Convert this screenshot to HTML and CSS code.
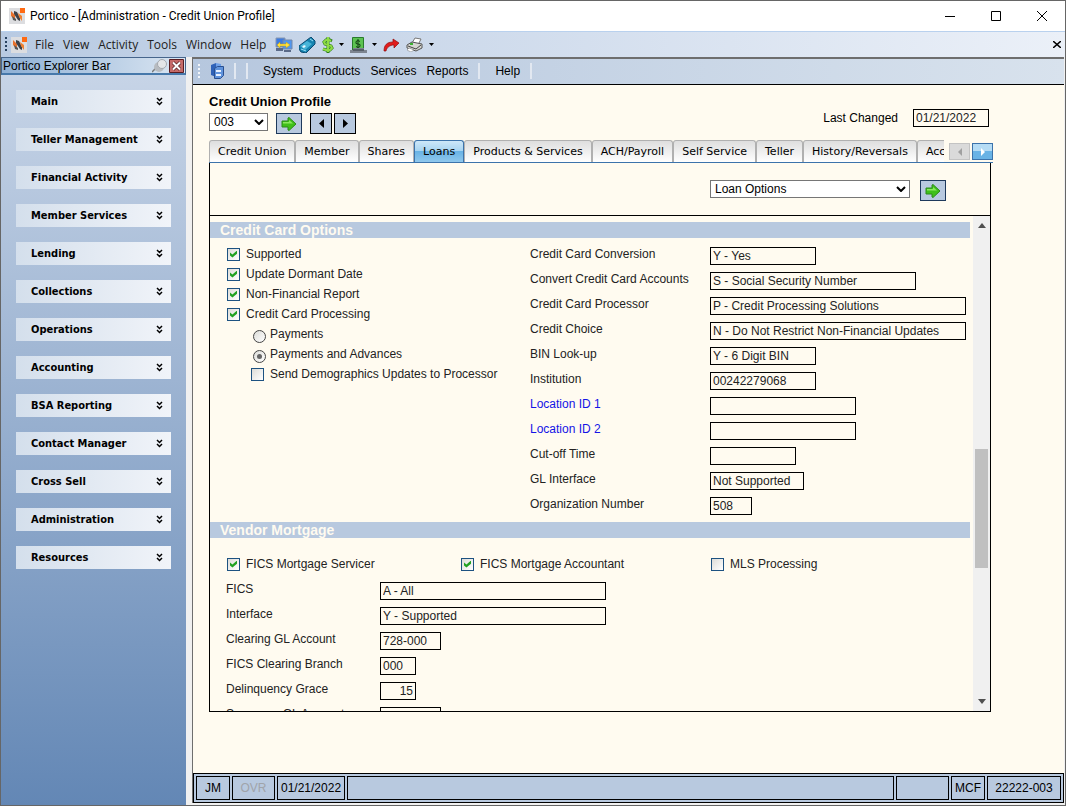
FILE: index.html
```html
<!DOCTYPE html>
<html lang="en">
<head>
    <meta charset="UTF-8">
    <meta name="viewport" content="width=device-width, initial-scale=1.0">
    <title>Portico - Credit Union Profile</title>
    <link rel="stylesheet" href="styles.css">
</head>
<body>
    <svg class="sprite" aria-hidden="true">
        <symbol id="logo" viewBox="0 0 16 16">
            <rect width="16" height="16" fill="#dcdde0"/>
            <path d="M2 3l4 4v5l-4-4z" fill="#e8702a"/>
            <path d="M5 3l3 1 3 6v3l-2-1-4-6z" fill="#3d4148"/>
            <path d="M9 5l4 3v5l-3-4z" fill="#f08030"/>
            <path d="M3 8l4 3v2L4 12z" fill="#555"/>
            <rect x="11" width="5" height="5" fill="#ff6a13"/>
        </symbol>
        <symbol id="go" viewBox="0 0 16 14">
            <path d="M1 4h6V1l1-.5L15 7l-7 6.500-1-.5v-3H1z" fill="#3fc01a" stroke="#2d8a1b"/>
            <path d="M2 5h6V3l4 3.500H2z" fill="#8be860"/>
        </symbol>
        <symbol id="more" viewBox="0 0 7 10">
            <path d="M1 1l2.500 2.500L6 1M1 5l2.500 2.500L6 5" fill="none" stroke="#000" stroke-width="1.500"/>
        </symbol>
        <symbol id="drop" viewBox="0 0 5 3">
            <path d="M0 0h5L2.500 3z" fill="#000"/>
        </symbol>
    </svg>

    <div class="window">
        <header class="title-bar">
            <svg class="logo" width="16" height="16"><use href="#logo"/></svg>
            <h1>Portico - [Administration - Credit Union Profile]</h1>
            <div class="window-buttons">
                <button type="button" aria-label="Minimize"><svg width="10" height="10"><path d="M0 5.500h10" stroke="#000"/></svg></button>
                <button type="button" aria-label="Maximize"><svg width="10" height="10"><path d="M.5.5h9v9h-9z" fill="none" stroke="#000"/></svg></button>
                <button type="button" aria-label="Close"><svg width="10" height="10"><path d="M0 0l10 10M10 0L0 10" stroke="#000"/></svg></button>
            </div>
        </header>

        <nav class="menu-bar">
            <span class="grip"></span>
            <svg class="logo" width="16" height="16"><use href="#logo"/></svg>
            <a href="#">File</a>
            <a href="#">View</a>
            <a href="#">Activity</a>
            <a href="#">Tools</a>
            <a href="#">Window</a>
            <a href="#">Help</a>
            <div class="tools">
                <button type="button" aria-label="Connections">
                    <svg width="18" height="16" viewBox="0 0 18 16">
                        <path d="M1 1h9v9H1z" fill="#3d7be0" stroke="#8898b0"/>
                        <path d="M8 3h9v9H8z" fill="#4f96f0" stroke="#7488a8"/>
                        <path d="M1 11h7v3H1zM9 13h7v2H9z" fill="#5a6a88"/>
                        <path d="M2 8l3-3v2h6V5l4 3-4 3V9H5v2z" fill="#ffe23c" stroke="#c79b10" stroke-width=".5"/>
                    </svg>
                </button>
                <button type="button" aria-label="Tag">
                    <svg width="17" height="16" viewBox="0 0 17 16">
                        <path d="M0 9L8 3l4-3 4 4v3l-9 9-5-1-2-3z" fill="#1683b0" stroke="#0b4a70"/>
                        <path d="M1 9l7-5 5 3-7 6z" fill="#48b5d8"/>
                        <path d="M3 10l2-2 2 1-2 2z" fill="#e5f8ff"/>
                        <path d="M11 2l3 2M2 12l5 2" stroke="#9be0f5"/>
                    </svg>
                </button>
                <button type="button" class="with-drop" aria-label="Cash">
                    <svg width="12" height="16" viewBox="0 0 12 16">
                        <path d="M10 4L8 3H4L2 5l1 2 6 2 1 2-2 2H4l-3-1M6 0v16" fill="none" stroke="#2d7d16" stroke-width="3"/>
                        <path d="M9 4L7 3H4L2 5l1 2 6 2 1 2-2 2H4l-3-1M6 0v15" fill="none" stroke="#8fdc46" stroke-width="2"/>
                    </svg>
                    <svg class="drop" width="5" height="3"><use href="#drop"/></svg>
                </button>
                <button type="button" class="with-drop" aria-label="Teller cash">
                    <svg width="17" height="16" viewBox="0 0 17 16">
                        <path d="M2.500.5h11v13h-11z" fill="#5cc352" stroke="#287c2c"/>
                        <path d="M10 4.500L8 3.500l-2 1v2l4 1v2l-2 1-2-1M8 2v10" fill="none" stroke="#123f15"/>
                        <path d="M0 13h3v-2h11v2h3v3H0z" fill="#7d8590"/>
                        <path d="M3 13h11" stroke="#303840"/>
                    </svg>
                    <svg class="drop" width="5" height="3"><use href="#drop"/></svg>
                </button>
                <button type="button" aria-label="Forward">
                    <svg width="17" height="14" viewBox="0 0 17 14">
                        <path d="M1 13c0-6 3-9 9-9V1l6 4-5 5V7C7 7 4 9 3 13z" fill="#e21c1c" stroke="#8f0b0b" stroke-width=".7"/>
                    </svg>
                </button>
                <button type="button" class="with-drop" aria-label="Print">
                    <svg width="18" height="15" viewBox="0 0 18 15">
                        <path d="M6 6l3-5 6 1-3 6z" fill="#fff" stroke="#777"/>
                        <path d="M1 8l5-3 10 2v4l-6 3-9-3z" fill="#d5d5d0" stroke="#555"/>
                        <path d="M2 9l8 3 5-4" fill="none" stroke="#444"/>
                        <path d="M3 11l5 2-3 2-4-2z" fill="#fff" stroke="#777" stroke-width=".5"/>
                        <path d="M4 7h3" stroke="#3cb030" stroke-width="2"/>
                    </svg>
                    <svg class="drop" width="5" height="3"><use href="#drop"/></svg>
                </button>
            </div>
            <button type="button" class="close-child" aria-label="Close profile"><svg width="8" height="7"><path d="M0 0l8 7M8 0L0 7" stroke="#000" stroke-width="1.500"/></svg></button>
        </nav>

        <div class="workspace">
            <aside class="explorer">
                <div class="explorer-header">
                    <h2>Portico Explorer Bar</h2>
                    <button type="button" aria-label="Pin">
                        <svg width="15" height="14" viewBox="0 0 15 14">
                            <path d="M0 13l4-4" stroke="#777" stroke-width="1.500"/>
                            <ellipse cx="7" cy="8" rx="5" ry="5" fill="#b7bbc0"/>
                            <circle cx="10" cy="5" r="4.500" fill="#e3e5e8" stroke="#a4a9af"/>
                        </svg>
                    </button>
                    <button type="button" aria-label="Close explorer bar">
                        <svg width="15" height="14" viewBox="0 0 15 14">
                            <path d="M.5.5h14v13H.5z" fill="#c66a68" stroke="#5a1c20"/>
                            <path d="M4 3.500l7 7M11 3.500l-7 7" stroke="#522" stroke-width="3.500"/>
                            <path d="M4 3.500l7 7M11 3.500l-7 7" stroke="#fff" stroke-width="2"/>
                        </svg>
                    </button>
                </div>
                <nav class="explorer-groups">
                    <button type="button">Main <svg width="7" height="10"><use href="#more"/></svg></button>
                    <button type="button">Teller Management <svg width="7" height="10"><use href="#more"/></svg></button>
                    <button type="button">Financial Activity <svg width="7" height="10"><use href="#more"/></svg></button>
                    <button type="button">Member Services <svg width="7" height="10"><use href="#more"/></svg></button>
                    <button type="button">Lending <svg width="7" height="10"><use href="#more"/></svg></button>
                    <button type="button">Collections <svg width="7" height="10"><use href="#more"/></svg></button>
                    <button type="button">Operations <svg width="7" height="10"><use href="#more"/></svg></button>
                    <button type="button">Accounting <svg width="7" height="10"><use href="#more"/></svg></button>
                    <button type="button">BSA Reporting <svg width="7" height="10"><use href="#more"/></svg></button>
                    <button type="button">Contact Manager <svg width="7" height="10"><use href="#more"/></svg></button>
                    <button type="button">Cross Sell <svg width="7" height="10"><use href="#more"/></svg></button>
                    <button type="button">Administration <svg width="7" height="10"><use href="#more"/></svg></button>
                    <button type="button">Resources <svg width="7" height="10"><use href="#more"/></svg></button>
                </nav>
            </aside>

            <main class="document">
                <nav class="toolbar">
                    <span class="grip light"></span>
                    <button type="button" aria-label="Server">
                        <svg width="14" height="16" viewBox="0 0 14 16">
                            <path d="M1 2l5-2v14l-5-2z" fill="#2f62b8"/>
                            <path d="M6 0l5 1v3H6z" fill="#6fa0e8"/>
                            <path d="M4.500 5.500l3-2h6v9l-3 3h-6z" fill="#5f93dc" stroke="#294f90"/>
                            <path d="M6 7h5v2H6zM6 11h5v2H6z" fill="#e8f1ff"/>
                        </svg>
                    </button>
                    <span class="separator"></span>
                    <span class="separator low"></span>
                    <a href="#">System</a>
                    <a href="#">Products</a>
                    <a href="#">Services</a>
                    <a href="#">Reports</a>
                    <span class="separator low"></span>
                    <a href="#">Help</a>
                    <span class="separator"></span>
                </nav>

                <form class="profile">
                    <div class="profile-header">
                        <div>
                            <h2 id="profile-title">Credit Union Profile</h2>
                            <div class="record-picker">
                                <div class="select">
                                    <select aria-labelledby="profile-title"><option>003</option></select>
                                    <svg width="10" height="6"><path d="M1 1l4 4 4-4" fill="none" stroke="#000" stroke-width="2"/></svg>
                                </div>
                                <button type="button" class="go" aria-label="Open"><svg width="16" height="14"><use href="#go"/></svg></button>
                                <div class="pager">
                                    <button type="button" aria-label="Previous"><svg width="5" height="9"><path d="M5 0v9L0 4.500z"/></svg></button>
                                    <button type="button" aria-label="Next"><svg width="5" height="9"><path d="M0 0v9l5-4.500z"/></svg></button>
                                </div>
                            </div>
                        </div>
                        <div class="last-changed">
                            <label for="changed">Last Changed</label>
                            <input id="changed" class="w-date" value="01/21/2022" readonly>
                        </div>
                    </div>

                    <div class="tab-strip">
                        <div class="tabs">
                            <button type="button">Credit Union</button>
                            <button type="button">Member</button>
                            <button type="button">Shares</button>
                            <button type="button" class="active">Loans</button>
                            <button type="button">Products &amp; Services</button>
                            <button type="button">ACH/Payroll</button>
                            <button type="button">Self Service</button>
                            <button type="button">Teller</button>
                            <button type="button">History/Reversals</button>
                            <button type="button">Accounting</button>
                        </div>
                        <div class="tab-scroll">
                            <button type="button" disabled aria-label="Scroll tabs left"><svg width="4" height="8"><path d="M4 0v8L0 4z" fill="#a0a0a0"/></svg></button>
                            <button type="button" aria-label="Scroll tabs right"><svg width="4" height="8"><path d="M0 0v8l4-4z" fill="#fff"/></svg></button>
                        </div>
                    </div>

                    <div class="panel">
                        <div class="panel-filter">
                            <div class="select wide">
                                <select aria-label="Section"><option>Loan Options</option></select>
                                <svg width="10" height="6"><path d="M1 1l4 4 4-4" fill="none" stroke="#000" stroke-width="2"/></svg>
                            </div>
                            <button type="button" class="go" aria-label="Go to section"><svg width="16" height="14"><use href="#go"/></svg></button>
                        </div>
                        <div class="panel-scroll">
                            <div class="panel-content">
                                <section>
                                    <h3>Credit Card Options</h3>
                                    <div class="card-options">
                                        <div class="checks">
                                            <label><input type="checkbox" checked>Supported</label>
                                            <label><input type="checkbox" checked>Update Dormant Date</label>
                                            <label><input type="checkbox" checked>Non-Financial Report</label>
                                            <label><input type="checkbox" checked>Credit Card Processing</label>
                                            <div class="nested">
                                                <label><input type="radio" name="processing">Payments</label>
                                                <label><input type="radio" name="processing" checked>Payments and Advances</label>
                                                <label><input type="checkbox">Send Demographics Updates to Processor</label>
                                            </div>
                                        </div>
                                        <div class="fields card-fields">
                                            <label for="conversion">Credit Card Conversion</label>
                                            <input id="conversion" class="w-code" value="Y - Yes">
                                            <label for="convert">Convert Credit Card Accounts</label>
                                            <input id="convert" class="w-medium" value="S - Social Security Number">
                                            <label for="processor">Credit Card Processor</label>
                                            <input id="processor" class="w-long" value="P - Credit Processing Solutions">
                                            <label for="choice">Credit Choice</label>
                                            <input id="choice" class="w-long" value="N - Do Not Restrict Non-Financial Updates">
                                            <label for="bin">BIN Look-up</label>
                                            <input id="bin" class="w-code" value="Y - 6 Digit BIN">
                                            <label for="institution">Institution</label>
                                            <input id="institution" class="w-code" value="00242279068">
                                            <label for="location1" class="editable">Location ID 1</label>
                                            <input id="location1" class="w-location">
                                            <label for="location2" class="editable">Location ID 2</label>
                                            <input id="location2" class="w-location">
                                            <label for="cutoff">Cut-off Time</label>
                                            <input id="cutoff" class="w-time">
                                            <label for="gl">GL Interface</label>
                                            <input id="gl" class="w-status" value="Not Supported">
                                            <label for="organization">Organization Number</label>
                                            <input id="organization" class="w-number" value="508">
                                        </div>
                                    </div>
                                </section>
                                <section>
                                    <h3>Vendor Mortgage</h3>
                                    <div class="mortgage-checks">
                                        <label><input type="checkbox" checked>FICS Mortgage Servicer</label>
                                        <label><input type="checkbox" checked>FICS Mortgage Accountant</label>
                                        <label><input type="checkbox">MLS Processing</label>
                                    </div>
                                    <div class="fields mortgage-fields">
                                        <label for="fics">FICS</label>
                                        <input id="fics" class="w-vendor" value="A - All">
                                        <label for="interface">Interface</label>
                                        <input id="interface" class="w-vendor" value="Y - Supported">
                                        <label for="clearing">Clearing GL Account</label>
                                        <input id="clearing" class="w-account" value="728-000">
                                        <label for="branch">FICS Clearing Branch</label>
                                        <input id="branch" class="w-small" value="000">
                                        <label for="grace">Delinquency Grace</label>
                                        <input id="grace" class="w-small right" value="15">
                                        <label for="suspense">Suspense GL Account</label>
                                        <input id="suspense" class="w-account">
                                    </div>
                                </section>
                            </div>
                            <div class="scrollbar">
                                <svg width="8" height="5"><path d="M0 5h8L4 0z" fill="#505050"/></svg>
                                <div class="track"><div class="thumb"></div></div>
                                <svg width="8" height="5"><path d="M0 0h8L4 5z" fill="#505050"/></svg>
                            </div>
                        </div>
                    </div>
                </form>

                <footer class="status-bar">
                    <span class="s-user">JM</span>
                    <span class="s-mode">OVR</span>
                    <span class="s-date">01/21/2022</span>
                    <span class="s-message"></span>
                    <span class="s-info"></span>
                    <span class="s-user">MCF</span>
                    <span class="s-branch">22222-003</span>
                </footer>
            </main>
        </div>
    </div>
</body>
</html>
```
FILE: styles.css
```css
* {
    box-sizing: border-box;
}
body {
    margin: 0;
    height: 100vh;
    overflow: hidden;
    background: #f0f0f0;
    font-family: "Liberation Sans", Arial, sans-serif;
    font-size: 12px;
    color: #000;
}
h1, h2, h3 {
    margin: 0;
    font-weight: normal;
}
a {
    color: inherit;
    text-decoration: none;
}
button {
    display: flex;
    align-items: center;
    justify-content: center;
    margin: 0;
    padding: 0;
    border: 0;
    background: none;
    color: inherit;
    font: inherit;
}
svg {
    display: block;
    flex: none;
}
.sprite {
    position: absolute;
    width: 0;
    height: 0;
}
.window {
    display: flex;
    flex-direction: column;
    height: 100vh;
    border: 1px solid #666;
}

/* Title bar and menu */
.title-bar {
    display: flex;
    align-items: center;
    height: 30px;
    padding-left: 8px;
    background: #fff;
}
.title-bar h1 {
    margin-left: 5px;
    font-family: Roboto, "Segoe UI", sans-serif;
    font-size: 12px;
}
.window-buttons {
    display: flex;
    margin-left: auto;
}
.window-buttons button {
    width: 46px;
    height: 28px;
}
.menu-bar {
    display: flex;
    align-items: center;
    gap: 9px;
    height: 26px;
    padding: 0 4px;
    border-top: 1px solid #b9d1ee;
    background: linear-gradient(90deg, #b8cae2, #ebf0f8);
    color: #222;
    font-family: "Open Sans", "Noto Sans", sans-serif;
}
.menu-bar .logo {
    margin: 0 -1px 0 -5px;
}
.grip {
    width: 2px;
    height: 15px;
    background: repeating-linear-gradient(#27415f 0 2px, transparent 2px 4px);
}
.grip.light {
    background: repeating-linear-gradient(#f4f6fa 0 2px, transparent 2px 4px);
}
.tools {
    display: flex;
    align-items: center;
    gap: 6px;
}
.with-drop {
    gap: 5px;
}
.close-child {
    margin-left: auto;
}

.workspace {
    display: flex;
    flex: 1;
    min-height: 0;
}

/* Explorer bar */
.explorer {
    width: 185px;
    flex: none;
    background: linear-gradient(#c9d6e8, #6387b5);
}
.explorer-header {
    display: flex;
    align-items: center;
    gap: 2px;
    height: 18px;
    padding: 0 1px;
    border: 1px solid #46658c;
    border-bottom: 2px solid #4678aa;
    background: linear-gradient(90deg, #8eb0d5, #dbe6f2);
}
.explorer-header h2 {
    margin-right: auto;
    font-size: 12px;
}
.explorer-groups {
    display: flex;
    flex-direction: column;
    gap: 15px;
    padding: 15px;
}
.explorer-groups button {
    justify-content: space-between;
    height: 23px;
    padding: 0 8px 0 15px;
    background: linear-gradient(90deg, #d4dfec, #f1f4f9);
    font-family: "DejaVu Sans Condensed", Tahoma, sans-serif;
    font-size: 11px;
    font-weight: bold;
}

/* Document area */
.document {
    display: flex;
    flex: 1;
    flex-direction: column;
    min-width: 0;
    margin: 0 1px 2px 6px;
    border: solid #6e6e6e;
    border-width: 2px 0 0 1px;
    background: #fffbf0;
}
.toolbar {
    display: flex;
    align-items: center;
    flex: none;
    gap: 10px;
    height: 26px;
    padding: 0 0 1px 5px;
    border-bottom: 1px solid #000;
    background: linear-gradient(90deg, #b6c7de, #d8e2ed);
}
.separator {
    width: 2px;
    height: 16px;
    background: #e2e8f1;
}
.separator.low + a {
    margin-left: 5px;
}
.profile {
    display: flex;
    flex: 1;
    flex-direction: column;
    min-height: 0;
    padding: 8px 71px 61px 16px;
}
.profile-header {
    display: flex;
    justify-content: space-between;
    margin-right: 4px;
}
.profile-header h2 {
    height: 20px;
    font-size: 13px;
    font-weight: bold;
    line-height: 17px;
}
.record-picker {
    display: flex;
    gap: 8px;
}
.select {
    display: flex;
    align-items: center;
    position: relative;
    width: 59px;
    height: 18px;
}
.select.wide {
    width: 200px;
}
.select select {
    width: 100%;
    height: 100%;
    padding: 0 4px;
    border: 1px solid #767676;
    border-radius: 0;
    appearance: none;
    background: #fff;
    color: #000;
    font: inherit;
}
/* chevron lies over the select */
.select svg {
    position: absolute;
    right: 4px;
    pointer-events: none;
}
.go {
    width: 26px;
    height: 21px;
    border: 1px solid #1e395b;
    background: #b8c9df;
}
.pager {
    display: flex;
    gap: 2px;
}
.pager button {
    width: 22px;
    height: 21px;
    border: 1px solid #000;
    background: #b8c9df;
}
input {
    height: 18px;
    margin: 0;
    padding: 0 2px;
    border: 1px solid #000;
    border-radius: 0;
    background: #fffbf0;
    color: #222;
    font: inherit;
}
.last-changed {
    display: flex;
    align-items: center;
    gap: 15px;
    height: 18px;
    margin-top: 16px;
}

/* Tabs */
.tab-strip {
    display: flex;
    flex: none;
    justify-content: space-between;
    margin-top: 6px;
    border-bottom: 1px solid #3c73ab;
    font-family: "DejaVu Sans", Verdana, sans-serif;
    font-size: 11px;
}
.tabs {
    display: flex;
    overflow: hidden;
    margin-right: 5px;
}
.tabs button {
    flex: none;
    height: 22px;
    padding: 0 8px;
    border: 1px solid #b0b0b0;
    border-bottom: 0;
    border-radius: 3px 3px 0 0;
    background: linear-gradient(#dedede, #fff);
}
.tabs .active {
    border-color: #3c73ab;
    background: linear-gradient(#cde7f8 0, #a5d3f1 50%, #69b3e5 50%, #90c8ed);
}
.tab-scroll {
    display: flex;
    gap: 2px;
    padding-top: 3px;
}
.tab-scroll button {
    width: 21px;
    height: 17px;
    border: 1px solid #3c73ab;
    background: linear-gradient(#b5dcf5 50%, #69b3e5 50%);
}
.tab-scroll button:disabled {
    border-color: #c3c3c3;
    background: #dadada;
}

/* Scrolling panel */
.panel {
    display: flex;
    flex: 1;
    flex-direction: column;
    min-height: 0;
    margin-right: 2px;
    border: 1px solid #000;
    border-top: 0;
}
.panel-filter {
    display: flex;
    flex: none;
    justify-content: flex-end;
    gap: 10px;
    height: 53px;
    padding: 17px 44px 0 0;
    border-bottom: 1px solid #000;
}
.panel-scroll {
    display: flex;
    flex: 1;
    min-height: 0;
}
.panel-content {
    flex: 1;
    overflow: hidden;
    padding: 6px 3px 0 0;
    color: #222;
}
.panel-content h3 {
    height: 16px;
    padding-left: 10px;
    background: #b8c9df;
    color: #fffbf0;
    font-size: 14px;
    font-weight: bold;
    line-height: 16px;
}
.card-options {
    display: flex;
    gap: 32px;
    padding: 6px 0 7px 17px;
}
.checks {
    width: 271px;
}
.panel-content label {
    white-space: nowrap;
}
.checks label, .mortgage-checks label {
    display: flex;
    align-items: center;
    gap: 6px;
    height: 20px;
}
.nested {
    padding-left: 24px;
}
input[type="checkbox"], input[type="radio"] {
    appearance: none;
    flex: none;
    width: 13px;
    height: 13px;
    padding: 0;
    border: 1px solid #1d5281;
    background: linear-gradient(135deg, #dcdcd8, #fff);
}
input[type="radio"] {
    margin: 4px -2px 0 2px;
    border-color: #444;
    border-radius: 50%;
}
input[type="checkbox"]:checked::before {
    content: "";
    display: block;
    width: 7px;
    height: 7px;
    margin: 2px;
    background: #21a121;
    clip-path: polygon(0 28%, 35% 58%, 100% 0, 100% 45%, 35% 100%, 0 72%);
}
input[type="radio"]:checked::before {
    content: "";
    display: block;
    width: 5px;
    height: 5px;
    margin: 3px;
    border-radius: 50%;
    background: #666;
}
.fields {
    display: grid;
    row-gap: 7px;
}
.fields label {
    height: 14px;
    line-height: 14px;
}
.card-fields {
    grid-template-columns: 180px 1fr;
    padding-top: 3px;
}
.fields .editable {
    color: #1414e6;
}
.mortgage-checks {
    display: grid;
    grid-template-columns: 234px 250px 1fr;
    padding: 16px 0 0 17px;
}
.mortgage-fields {
    grid-template-columns: 154px 1fr;
    padding: 8px 0 0 16px;
}
.right {
    text-align: right;
}
.w-date { width: 76px; }
.w-code { width: 106px; }
.w-medium { width: 206px; }
.w-long { width: 256px; }
.w-location { width: 146px; }
.w-time { width: 86px; }
.w-status { width: 94px; }
.w-number { width: 42px; }
.w-vendor { width: 226px; }
.w-account { width: 61px; }
.w-small { width: 36px; }

.scrollbar {
    display: flex;
    flex: none;
    flex-direction: column;
    align-items: center;
    gap: 7px;
    width: 17px;
    padding: 7px 0;
    background: #f0f0f0;
}
.track {
    display: flex;
    flex: 1;
    flex-direction: column;
    width: 13px;
}
.thumb {
    height: 26%;
    margin-top: auto;
    margin-bottom: 124px;
    background: #c0c0c0;
}

/* Status bar */
.status-bar {
    display: flex;
    flex: none;
    gap: 2px;
    height: 30px;
    padding: 2px;
    border: 1px solid #000;
    background: #b8c9df;
}
.status-bar span {
    padding: 0 3px;
    border: 1px solid #000;
    line-height: 22px;
    text-align: center;
}
.s-user { width: 34px; }
.s-mode { width: 43px; }
.s-date { width: 68px; }
.s-info { width: 53px; }
.s-branch { width: 74px; }
.status-bar .s-mode {
    color: #a0a4aa;
}
.status-bar .s-message {
    flex: 1;
}
```
